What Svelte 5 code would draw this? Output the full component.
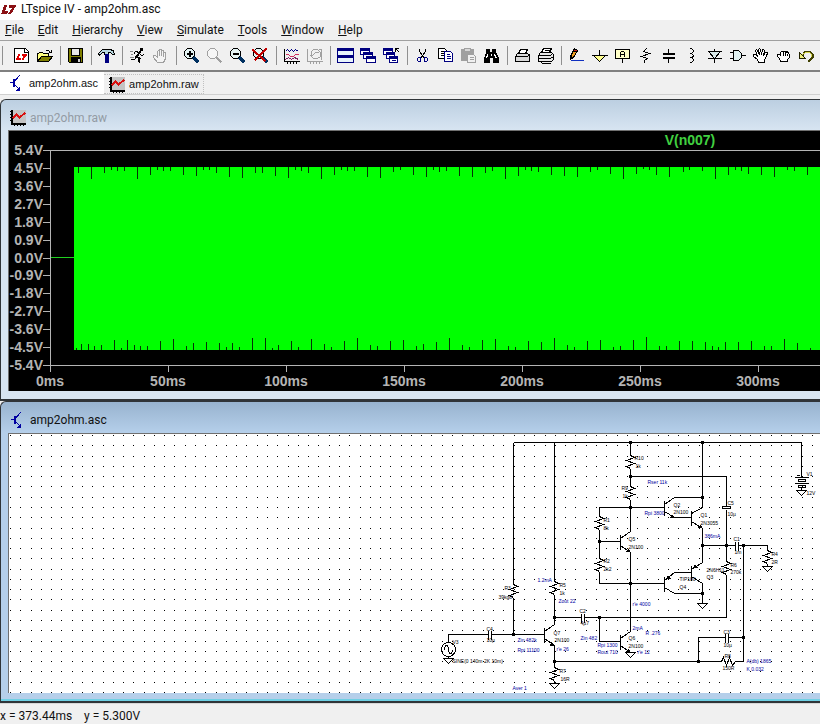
<script lang="ts">
  // LTspice main window: menu, toolbar, tab strip and two tiled child windows
  // (waveform viewer above, schematic below).

  // One stroke or filled area of a 16x16 icon: path, fill, stroke, stroke width.
  type Shape = [d: string, fill?: string, stroke?: string, width?: number];

  const navy = '#000080';
  const gray = '#a0a0a0';

  const ring = 'M4 1H8L11 4V8L8 11H4L1 8V4Z';
  const handOpen = 'M6 15L5 12L1 9V7H3L5 9L3 3L4 2L5 3L7 7L6 2L7 1L8 2L9 7L10 2H11L12 3L11 8L13 5H15L14 9L12 12V15Z';

  const icons: Record<string, Shape[]> = {
    logo: [
      ['M4 2L1 11H7L8 8H5L7 2Z', '#8b1014', 'none'],
      ['M8 2H16L15 4L11 11H8L12 5H8Z', '#8b1014', 'none'],
    ],
    'New Schematic': [
      ['M1 1H12L15 4V15H1Z', '#fff'],
      ['M11 1V5H15', 'none'],
      ['M5 6L2 12H7L8 10H5L7 6Z', '#e00000', 'none'],
      ['M8 6H14L13 8L10 12H8L10 8H8Z', '#e00000', 'none'],
    ],
    Open: [
      ['M1 14V6H2L3 5H6L7 6H12V9', '#ffff80'],
      ['M1 14L5 9H16L12 14Z', '#808000'],
      ['M9 4L10 3H12L14 5M15 2V5H12', 'none'],
    ],
    Save: [
      ['M1 1H15V15H2L1 14Z', '#808000'],
      ['M4 1H12V8H4Z', '#e8e8e8'],
      ['M4 10H13V15H4Z', '#000'],
      ['M10 11H12V14H10Z', '#d0d0d0', 'none'],
    ],
    'Control Panel': [
      ['M0 6L4 2H11L15 3L16 7H14L12 5H10V7H6V5H4L1 8Z', '#b8d8e0'],
      ['M7 7H10V15H7Z', navy, navy],
    ],
    Run: [
      ['M11 1H13V3H11Z', '#000'],
      ['M11 4L7 9L10 11L9 15', 'none', '#000', 2],
      ['M7 9L5 12H1M10 5L6 4L4 7M10 6L12 8L15 7', 'none'],
      ['M0 4H3M1 7H3M0 10H4', 'none', '#888'],
    ],
    Halt: [['M5 15L1 10V8H3L5 10V4L6 3L7 4V8V2H9V8V3H11V9V5H13V11L11 15Z', '#f4f4f4', gray]],
    'Zoom In': [
      [ring, '#e4f4f4'],
      ['M6 3V9M3 6H9', 'none', '#000', 2],
      ['M10 10L15 15', 'none', '#003060', 3],
    ],
    Pan: [
      [ring, '#f6f6f6', gray],
      ['M10 10L15 15', 'none', gray, 2],
    ],
    'Zoom Out': [
      [ring, '#e4f4f4'],
      ['M3 6H9', 'none', '#000', 2],
      ['M10 10L15 15', 'none', '#003060', 3],
    ],
    'Zoom Full Extents': [
      [ring, '#e4f4f4'],
      ['M10 10L15 15', 'none', '#003060', 3],
      ['M0 2L13 14M14 1L2 13', 'none', '#c00000', 2],
    ],
    'Autorange Y': [
      ['M1 1V14H16M1 2H0M1 5H0M1 8H0M1 11H0M4 14V16M7 14V16M10 14V16M13 14V16', 'none'],
      ['M2 4L4 2L6 4L8 2L10 4L12 2L15 4', 'none', navy],
      ['M2 7H5L7 9H10L12 7H15', 'none', '#d03060'],
      ['M2 12L5 10L8 12L11 10L15 12', 'none', '#802060'],
    ],
    'Plot Settings': [
      ['M1 1V14H16M1 2H0M1 5H0M1 8H0M1 11H0M4 14V16M7 14V16M10 14V16M13 14V16', 'none', gray],
      ['M7 2H11L14 5V9L11 11H7L5 9V4Z', 'none', gray],
      ['M3 8H6L9 5H12M15 1V12M12 2H15', 'none', gray],
    ],
    'Tile Windows': [
      ['M0 1H16V8H0ZM0 8H16V15H0Z', '#e8f4fc', navy],
      ['M0 1H16V3H0ZM0 8H16V10H0Z', navy, navy],
    ],
    'Cascade Windows': [
      ['M0 1H9V7H0Z', '#fff', navy],
      ['M0 1H9V3H0Z', navy, navy],
      ['M3 5H12V11H3Z', '#fff', navy],
      ['M3 5H12V7H3Z', navy, navy],
      ['M6 9H15V15H6Z', '#fff', navy],
      ['M6 9H15V11H6Z', navy, navy],
    ],
    'Close Windows': [
      ['M0 1H9V7H0Z', '#fff', navy],
      ['M0 1H9V3H0Z', navy, navy],
      ['M3 5H11V11H3Z', '#fff', navy],
      ['M3 5H11V7H3Z', navy, navy],
      ['M6 9H14V15H6Z', '#fff', navy],
      ['M6 9H14V11H6ZM8 13H12', navy, navy],
      ['M12 4V1H15M12 1L16 5', 'none'],
    ],
    Cut: [
      ['M5 1V4L10 11M11 1V4L6 11', 'none'],
      ['M4 10H6V14H4L3 13V11ZM10 10H12L13 11V13L12 14H10Z', 'none', navy],
    ],
    Copy: [
      ['M1 1H7L9 3V11H1Z', '#fff'],
      ['M3 4H6M3 6H7M3 8H7', 'none'],
      ['M7 4H13L15 6V14H7Z', '#fff', navy],
      ['M9 7H12M9 9H13M9 11H13', 'none', navy],
    ],
    Paste: [
      ['M1 2H13V13H1Z', gray, gray],
      ['M4 1H10V4H4Z', '#d8d8d8', gray],
      ['M7 7H13L15 9V15H7Z', '#f0f0f0', gray],
      ['M9 10H13M9 12H13', 'none', gray],
    ],
    Find: [
      ['M3 2H6V5H9V2H12V5L15 11V15H10V10H6V15H1V11L3 5Z', '#000'],
      ['M4 7L3 11M11 7L13 11M8 6V8', 'none', '#fff'],
    ],
    Print: [
      ['M4 6L6 2H13L11 6', '#fff'],
      ['M1 9L3 6H13L15 8V14H1Z', '#d8d8d8'],
      ['M1 9H13L15 7', 'none'],
    ],
    'Print Preview': [
      ['M4 5L6 1H14L12 5', '#fff'],
      ['M7 3H12M1 8L3 5H14L16 7V12L14 14H1Z', '#e8e8e8'],
      ['M1 8H13L15 6M1 11H13L16 9M3 14L5 16H13', 'none'],
    ],
    'Draw Wire': [
      ['M2 9L6 1L9 3L5 10L2 12Z', '#f0a020'],
      ['M6 1L9 3L8 5L5 3Z', '#c02020'],
      ['M2 12V9L5 10Z', '#000'],
      ['M2 13H15', 'none', '#1030c0'],
    ],
    Ground: [
      ['M8 2V8', 'none'],
      ['M2 8H14L8 14Z', '#ffff90'],
      ['M0 8H16', 'none'],
    ],
    'Label Net': [
      ['M1 2H15V11H1Z', '#ffffc8'],
      ['M8 11V15M6 9V5L7 4H9L10 5V9M6 7H10', 'none'],
    ],
    Resistor: [['M9 1L6 4L12 6L4 9L10 11L7 13V15', 'none']],
    Capacitor: [
      ['M8 1V6M8 10V15', 'none'],
      ['M2 6H14M2 10H14', 'none', '#000', 2],
    ],
    Inductor: [['M6 1H8L10 3V4L8 6H6H8L10 8V9L8 10H6H8L10 12V13L8 15H6', 'none']],
    Diode: [
      ['M8 1V4M8 11V15M1 4H15M1 11H15', 'none'],
      ['M2 4H14L8 11Z', '#d8e8e8'],
    ],
    Component: [
      ['M4 3H9L12 6V10L9 13H4Z', '#e0f0f0'],
      ['M0 5H4M0 11H4M12 8H16', 'none'],
    ],
    Move: [[handOpen, '#fff']],
    Drag: [
      ['M5 14L4 11L2 9V7H4L5 8V5L6 4H7L8 5V4H10V5L12 4L13 6L14 7V10L12 12V14Z', '#fff'],
      ['M8 5V8M10 5V8M12 6V8', 'none'],
    ],
    Undo: [
      ['M4 8L7 4H11L14 7V10L11 13H9', 'none', '#404000', 2],
      ['M4 7L7 5H11L13 7V9', 'none', '#d8d850'],
      ['M1 5V11H7Z', '#f0f080', '#202000'],
    ],
    wave: [
      ['M2 0H16V13H2Z', '#c4c4c4', 'none'],
      ['M2 0V14H16', 'none', '#000', 2],
      ['M0 2H2M0 5H2M0 8H2M0 11H2M5 14V16M8 14V16M11 14V16M14 14V16', 'none'],
      ['M3 9L7 5L10 8L16 3', 'none', '#d81010', 2],
    ],
    transistor: [
      ['M1 7H5', 'none', '#0000a0'],
      ['M5 3V11', 'none', '#0000a0', 2],
      ['M6 6L11 0M6 9L11 14', 'none', '#0000a0'],
      ['M11 15V11L7 15Z', '#0000a0', 'none'],
    ],
  };

  const toolbar: string[][] = [
    ['New Schematic', 'Open'],
    ['Save'],
    ['Control Panel'],
    ['Run', 'Halt'],
    ['Zoom In', 'Pan', 'Zoom Out', 'Zoom Full Extents'],
    ['Autorange Y', 'Plot Settings'],
    ['Tile Windows', 'Cascade Windows', 'Close Windows'],
    ['Cut', 'Copy', 'Paste', 'Find'],
    ['Print', 'Print Preview'],
    ['Draw Wire', 'Ground', 'Label Net', 'Resistor', 'Capacitor', 'Inductor', 'Diode', 'Component', 'Move', 'Drag', 'Undo'],
  ];

  const menus = ['File', 'Edit', 'Hierarchy', 'View', 'Simulate', 'Tools', 'Window', 'Help'];

  const volts = ['5.4V', '4.5V', '3.6V', '2.7V', '1.8V', '0.9V', '0.0V', '-0.9V', '-1.8V', '-2.7V', '-3.6V', '-4.5V', '-5.4V'];
  const times = [0, 50, 100, 150, 200, 250, 300];
  const voltY = (i: number) => 19 + Math.round(i * 17.92);

  // Dips of the envelope, as [x, length] pairs.
  const topDips = [
    [69, 6], [82, 12], [95, 6], [102, 3], [108, 4], [115, 4], [128, 12], [141, 8], [148, 3], [154, 4], [161, 4],
    [174, 8], [187, 9], [194, 3], [200, 3], [207, 6], [220, 10], [233, 11], [246, 6], [253, 6], [266, 9], [279, 11],
    [286, 3], [292, 4], [299, 6], [312, 12], [325, 8], [332, 3], [338, 4], [345, 4], [358, 10], [371, 11], [384, 5],
    [391, 3], [404, 8], [417, 10], [424, 3], [430, 5], [437, 4], [450, 9], [463, 10], [476, 6], [483, 4], [496, 12],
    [509, 9], [516, 3], [522, 4], [529, 5], [542, 8], [555, 9], [568, 10], [581, 5], [588, 3], [601, 7], [614, 12],
    [627, 7], [634, 2], [640, 3], [647, 8], [660, 10], [674, 5], [680, 3], [693, 4], [706, 12], [719, 8], [726, 3],
    [732, 4], [739, 7], [752, 8], [765, 10], [778, 3], [785, 4], [798, 8],
  ];
  const bottomDips = [
    [67, 2], [72, 6], [79, 6], [85, 4], [92, 5], [105, 10], [112, 2], [118, 10], [125, 5], [131, 4], [138, 4],
    [151, 9], [164, 11], [177, 4], [184, 7], [197, 8], [210, 7], [217, 3], [223, 7], [230, 3], [243, 12], [256, 12],
    [263, 2], [269, 5], [282, 9], [289, 3], [302, 11], [315, 6], [322, 3], [335, 9], [348, 12], [361, 5], [368, 4],
    [381, 9], [394, 10], [407, 4], [414, 6], [427, 8], [440, 12], [453, 5], [460, 3], [473, 10], [486, 11], [499, 4],
    [506, 3], [519, 9], [532, 8], [545, 12], [558, 5], [565, 3], [578, 9], [591, 10], [604, 3], [611, 4], [624, 10],
    [637, 13], [650, 4], [657, 4], [670, 9], [683, 9], [696, 8], [703, 4], [709, 3], [716, 8], [729, 8], [742, 9],
    [755, 4], [762, 4], [775, 11], [788, 7], [801, 2],
  ];
  const topPath = topDips.map(([x, len]) => `M${x} 36v${len}`).join('');
  const bottomPath = bottomDips.map(([x, len]) => `M${x} 219v-${len}`).join('');

  // The schematic grid is a little over 10px wide, so every few columns are 11 apart.
  const steps = (n: number) => Array.from({ length: n }, (_, i) => 1 + Math.round(i * 10.28));
  const gridPath = steps(60)
    .map((y) => steps(180).map((x) => `M${x} ${y}h1`).join(''))
    .join('');

  // Vertical resistor zigzag, 13px tall, starting at x,y.
  const zig = (x: number, y: number) => `M${x} ${y}l4 2l-8 3l8 3l-8 3l4 2`;
  const ground = (x: number, y: number) => `M${x - 5} ${y}h10l-5 5z`;

  const wires = [
    'M513 442H801V477M513 442V584M513 597V634M448 642V634H488M491 634H544',
    'M554 442V581M554 594V624L544 631M544 638L554 645V667M554 680V683',
    'M554 617H581M584 617H726V574M599 617V641H620',
    'M554 661H721M735 661H743V545M698 661V637H725M728 637H743',
    'M630 442V455M630 468V486M630 499V531L620 538M620 545L630 552V631L620 638M620 645L630 652',
    'M630 476H726V506M726 509V560M664 507H599V516M599 529V558M599 571V583H664M599 541H620',
    'M664 504L674 497H702M664 511L674 517H691M702 442V507L691 513M691 521L702 528V562L691 569',
    'M691 576L702 583V603M664 580L674 572H691M664 587L674 593H702',
    'M702 545H735M738 545H767V550M767 563V566M448 655V658M801 487V490',
  ].join('');
  const resistors = [
    [513, 584], [554, 581], [554, 667], [630, 455], [630, 486], [599, 516], [599, 558], [726, 561], [767, 550],
  ]
    .map(([x, y]) => zig(x, y))
    .join('');
  const plates =
    'M488 630V639M491 630V639M581 613V622M584 613V622M725 633V642M728 633V642M735 541V550M738 541V550M722 506H730V508H722ZM794 477H808M798 479H805V481H798ZM794 483H808M798 485H805V487H798ZM796 475H799';
  const bars = 'M544 627V642M620 634V649M620 534V549M664 500V515M691 510V525M691 565V580M664 576V591';
  const arrows = 'M554 645l-5 0l2 -4zM630 652l-5 -1l3 -3zM630 552l-5 -1l3 -3zM674 517l-5 0l3 -3zM702 528l-5 -1l3 -3zM692 568l5 -1l-3 -3zM665 579l5 -1l-3 -3z';
  const grounds = [[554, 683], [630, 652], [702, 603], [767, 566], [448, 658], [801, 490]].map(([x, y]) => ground(x, y)).join('');
  const nodes = [
    [630, 442], [702, 442], [630, 476], [630, 507], [702, 497], [599, 541], [702, 545], [726, 545], [743, 545],
    [630, 583], [702, 593], [554, 617], [599, 617], [513, 634], [743, 637], [554, 661], [698, 661],
  ];

  type Label = [x: number, y: number, text: string];
  const parts: Label[] = [
    [634, 459, 'R10'], [635, 467, '1k'], [621, 489, 'R9'], [622, 497, '1k'], [673, 506, 'Q2'], [673, 513, '2N100'],
    [700, 516, 'Q1'], [700, 524, '2N3055'], [603, 521, 'R1'], [603, 529, '8k'], [628, 540, 'Q5'], [628, 548, '2N100'],
    [603, 562, 'R2'], [603, 570, '2k2'], [806, 475, 'V1'], [806, 494, '12V'], [727, 504, 'C5'], [727, 515, '10µ'],
    [733, 540, 'C1'], [734, 553, '1m'], [771, 555, 'R4'], [771, 563, '2R'], [706, 571, '2N6H11'], [706, 578, 'Q3'],
    [730, 566, 'R6'], [730, 573, '270k'], [679, 580, 'TIP100'], [679, 588, 'Q4'], [628, 639, 'Q6'], [628, 647, '2N100'],
    [579, 612, 'C2'], [580, 624, '4µ7'], [723, 633, 'C3'], [723, 646, '10µ'], [724, 657, 'R8'], [722, 669, '150R'],
    [452, 643, 'V3'], [452, 662, 'SINE(0 140m 2K 10m)'], [486, 630, 'C4'], [486, 641, '10µ'], [504, 589, 'R3'],
    [498, 598, '39kg8'], [559, 586, 'R5'], [559, 594, '1k'], [553, 634, 'Q7'], [554, 641, '2N100'], [559, 672, 'R7'],
    [560, 680, '16R'],
  ];
  const notes: Label[] = [
    [647, 483, 'Rser 11k'], [644, 514, 'Rpi 3800'], [704, 537, '386mA'], [632, 605, "r'e 4000"], [632, 629, '2mA'],
    [645, 634, 'R .276'], [637, 653, "r'e 12"], [597, 646, 'Rpi 1300'], [597, 653, 'Rout 710'], [580, 639, 'Zin 482'],
    [746, 662, 'A(db) 1865'], [746, 670, 'K 0.032'], [537, 581, '1.2mA'], [558, 602, 'Zout 22'], [556, 650, "r'e 26"],
    [517, 641, 'Zin 482k'], [517, 651, 'Rpi 11100'], [512, 689, 'Aver 1'],
  ];
</script>

{#snippet icon(name: string)}
  <svg class="icon" viewBox="0 0 17 17" aria-hidden="true">
    <g transform="translate(.5 .5)">
      {#each icons[name] as [d, fill = 'none', stroke = '#000', width = 1]}
        <path {d} {fill} {stroke} stroke-width={width} />
      {/each}
    </g>
  </svg>
{/snippet}

<div class="app">
  <header class="title-bar">
    {@render icon('logo')}
    <span>LTspice IV - amp2ohm.asc</span>
  </header>

  <nav class="menu-bar">
    {#each menus as menu}
      <button type="button"><u>{menu[0]}</u>{menu.slice(1)}</button>
    {/each}
  </nav>

  <div class="toolbar" role="toolbar" aria-label="Main">
    {#each toolbar as group}
      <div class="group">
        {#each group as name}
          <button type="button" aria-label={name} disabled={name === 'Halt' || name === 'Pan' || name === 'Paste'}>
            {@render icon(name)}
          </button>
        {/each}
      </div>
    {/each}
  </div>

  <div class="tabs" role="tablist">
    <button type="button" role="tab" aria-selected="true" class="active">
      {@render icon('transistor')}amp2ohm.asc
    </button>
    <button type="button" role="tab" aria-selected="false">
      {@render icon('wave')}amp2ohm.raw
    </button>
  </div>

  <main>
    <section class="child">
      <h2>{@render icon('wave')}amp2ohm.raw</h2>
      <svg class="plot" role="img" aria-label="V(n007) waveform">
        <g class="axis">
          <path d="M41 19V241" />
          <line x1="41" y1="19" x2="100%" y2="19" />
          <line x1="41" y1="234" x2="100%" y2="234" />
          {#each volts as _, i}
            <path d="M34 {voltY(i)}h7" />
          {/each}
          {#each times as _, i}
            <path d="M{41 + i * 118} 234v7" />
          {/each}
        </g>
        <path class="idle" d="M42 126H65" />
        <rect class="trace" x="65" y="36" width="100%" height="183" />
        <path class="dips" d={topPath + bottomPath} />
        {#each volts as volt, i}
          <text x="34" y={voltY(i) + 5} text-anchor="end">{volt}</text>
        {/each}
        {#each times as time, i}
          <text x={41 + i * 118} y="255" text-anchor="middle">{time}ms</text>
        {/each}
        <text class="name" x="681" y="14" text-anchor="middle">V(n007)</text>
      </svg>
    </section>

    <section class="child focused">
      <h2>{@render icon('transistor')}amp2ohm.asc</h2>
      <svg class="schematic" role="img" aria-label="Amplifier schematic">
        <path class="grid" d={gridPath} transform="translate(0 .5)" />
        <g transform="translate(-8.5 -433.5)">
          <path class="wire" d={wires + resistors + plates + bars} />
          <path class="wire" d="M721 661l2 -4l3 8l3 -8l3 8l3 -4" />
          <path class="wire" d="M444 649c0 -5 4 -5 4 0s4 5 4 0" />
          <circle class="wire" cx="448" cy="649" r="7" />
          <path class="wire open" d={grounds} />
          <path class="solid" d={arrows} />
          {#each nodes as [x, y]}
            <rect class="solid" x={x - 1.5} y={y - 1.5} width="3" height="3" />
          {/each}
          {#each parts as [x, y, text]}
            <text {x} {y}>{text}</text>
          {/each}
          {#each notes as [x, y, text]}
            <text class="note" {x} {y}>{text}</text>
          {/each}
        </g>
      </svg>
    </section>
  </main>

  <footer>
    <span>x = 373.44ms</span>
    <span>y = 5.300V</span>
  </footer>
</div>

<style>
  :global(body) {
    margin: 0;
  }

  .app {
    display: flex;
    flex-direction: column;
    min-height: 100vh;
    overflow: hidden;
    background: #f0f0f0;
    color: #111;
    font: 12px/16px Roboto, 'Noto Sans', sans-serif;
  }

  button {
    padding: 0;
    border: 0;
    background: none;
    color: inherit;
    font: inherit;
    white-space: nowrap;
  }

  .icon {
    flex: none;
    width: 17px;
    height: 17px;
    shape-rendering: crispEdges;
  }

  .title-bar {
    display: flex;
    align-items: center;
    gap: 4px;
    height: 20px;
    background: #fff;
  }

  .title-bar span {
    padding-bottom: 2px;
  }

  .menu-bar {
    display: flex;
    align-items: center;
    gap: 14px;
    height: 20px;
    padding-left: 5px;
    border-bottom: 1px solid #a0a0a0;
  }

  .toolbar {
    display: flex;
    align-items: center;
    height: 29px;
    padding-left: 2px;
    border-bottom: 2px solid #808080;
  }

  .group {
    display: flex;
    padding: 0 4px 0 3px;
    border-left: 1px solid #909090;
  }

  .group:first-child {
    padding-left: 7px;
  }

  .toolbar button {
    display: grid;
    place-items: center;
    width: 23px;
    height: 19px;
  }

  .tabs {
    display: flex;
    align-items: flex-end;
    height: 22px;
    border-bottom: 1px solid #d0d0d0;
    font: 11px/16px 'Liberation Sans', Arial, sans-serif;
  }

  .tabs button {
    display: flex;
    align-items: center;
    gap: 4px;
    height: 20px;
    padding: 0 4px;
    border: 1px dotted #c0c0c0;
    border-left: 0;
  }

  .tabs .active {
    height: 22px;
    padding: 0 6px 0 8px;
    border: 0;
    background: #fff;
  }

  main {
    display: flex;
    flex: 1;
    flex-direction: column;
    padding-top: 4px;
  }

  .child {
    display: flex;
    flex-direction: column;
    padding: 0 0 8px 7px;
    border: 1px solid #303438;
    border-width: 1px 0 2px 1px;
    border-top-left-radius: 6px;
    background: linear-gradient(#bccfe1, #d8e5f2 31px);
  }

  .focused {
    flex: 1;
    background: linear-gradient(#98b3cf, #b5cfea 31px);
    box-shadow: inset 0 -2px #6fd0e4;
  }

  h2 {
    display: flex;
    align-items: center;
    gap: 4px;
    height: 30px;
    margin: 0;
    padding: 5px 0 0 1px;
    box-sizing: border-box;
    color: #939ba4;
    font: inherit;
  }

  .focused h2 {
    height: 31px;
    color: #111;
  }

  .plot,
  .schematic {
    display: block;
    width: 100%;
    height: 261px;
    border-top: 1px solid #707070;
    border-left: 1px solid #707070;
    box-sizing: border-box;
  }

  .plot {
    background: #000;
    font: bold 14px 'Liberation Sans', Arial, sans-serif;
    fill: #b4b4b4;
  }

  .axis,
  .dips,
  .idle {
    fill: none;
    stroke: #b4b4b4;
    shape-rendering: crispEdges;
  }

  .idle {
    stroke: #20d020;
  }

  .trace {
    fill: #0f0;
  }

  .dips {
    stroke: #063006;
  }

  .name {
    fill: #40d040;
  }

  .schematic {
    flex: 1;
    min-height: 260px;
    background: #fff;
    font: 5px 'Liberation Sans', Arial, sans-serif;
  }

  .grid,
  .wire {
    fill: none;
    stroke: #000;
    shape-rendering: crispEdges;
  }

  .open {
    fill: #fff;
  }

  .solid {
    fill: #000;
    shape-rendering: crispEdges;
  }

  .note {
    fill: #0000a0;
  }

  footer {
    display: flex;
    gap: 12px;
    padding: 4px 0 0;
    border-top: 1px solid #d8d8d8;
  }
</style>
